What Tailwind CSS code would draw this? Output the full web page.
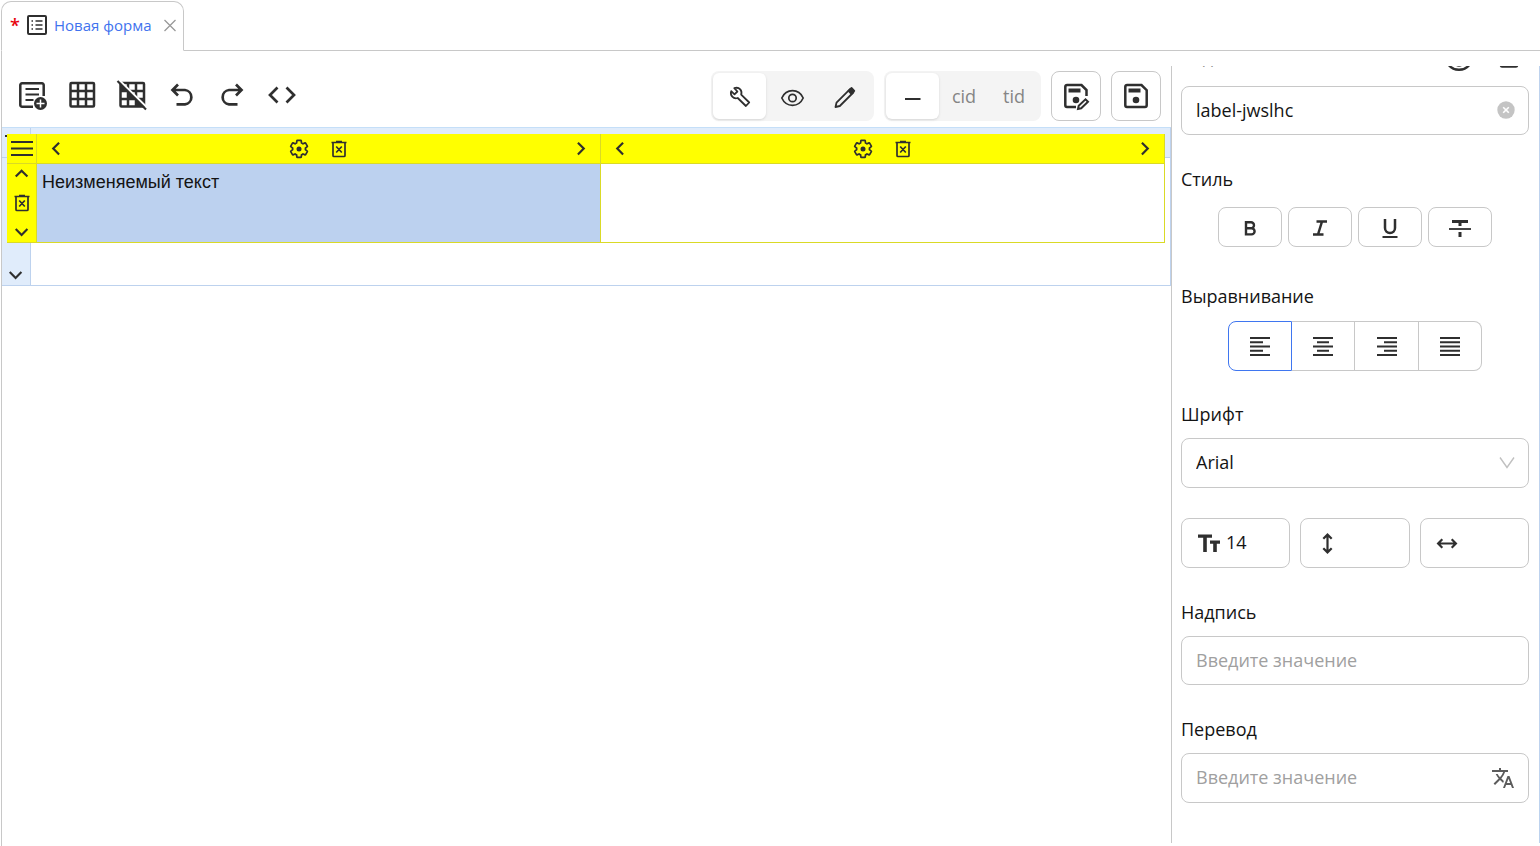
<!DOCTYPE html>
<html lang="ru">
<head>
    <meta charset="UTF-8">
    <meta name="viewport" content="width=device-width, initial-scale=1.0">
    <script src="https://cdn.jsdelivr.net/npm/@tailwindcss/browser@4"></script>
    <title>Новая форма</title>
</head>
<body class="h-screen overflow-hidden flex flex-col bg-white text-[#141414] text-[18px] font-['Open_Sans','Noto_Sans',sans-serif]">
    <!-- Shared icons -->
    <svg class="hidden">
        <symbol id="chevron-left" viewBox="0 0 24 24"><path d="M14.500 4.500 7.500 11.500l7 7" fill="none" stroke="currentColor" stroke-width="2.600"/></symbol>
        <symbol id="chevron-right" viewBox="0 0 24 24"><path d="m9.500 4.500 7 7-7 7" fill="none" stroke="currentColor" stroke-width="2.600"/></symbol>
        <symbol id="chevron-up" viewBox="0 0 24 24"><path d="m4.500 15 7-7 7 7" fill="none" stroke="currentColor" stroke-width="2.600"/></symbol>
        <symbol id="chevron-down" viewBox="0 0 24 24"><path d="m4.500 8.500 7 7 7-7" fill="none" stroke="currentColor" stroke-width="2.600"/></symbol>
        <symbol id="menu" viewBox="0 0 24 16"><path d="M1 1h22M1 7.500h22M1 14h22" fill="none" stroke="currentColor" stroke-width="2"/></symbol>
        <symbol id="trash" viewBox="0 0 20 20"><path d="M2.500 3.500h15M7 2.500h6M4 4v12.500a1 1 0 0 0 1 1h10a1 1 0 0 0 1-1V4M7.200 7.500l5.600 6M12.800 7.500l-5.600 6" fill="none" stroke="currentColor" stroke-width="1.700"/></symbol>
        <symbol id="gear" viewBox="0 0 24 24"><path d="M19.430 12.980c.04-.32.07-.64.07-.98s-.03-.66-.07-.98l2.110-1.650c.19-.15.24-.42.12-.64l-2-3.460c-.09-.16-.26-.25-.44-.25-.06 0-.12.01-.17.03l-2.490 1c-.52-.4-1.080-.73-1.690-.98l-.38-2.650A.488.488 0 0 0 14 2h-4c-.25 0-.46.18-.49.42l-.38 2.650c-.61.25-1.170.59-1.690.98l-2.490-1a.566.566 0 0 0-.18-.03c-.17 0-.34.09-.43.25l-2 3.460c-.13.22-.07.49.12.64l2.110 1.650c-.04.32-.07.65-.07.98s.03.66.07.98l-2.110 1.650c-.19.15-.24.42-.12.64l2 3.460c.09.16.26.25.44.25.06 0 .12-.01.17-.03l2.490-1c.52.4 1.080.73 1.690.98l.38 2.650c.03.24.24.42.49.42h4c.25 0 .46-.18.49-.42l.38-2.650c.61-.25 1.170-.59 1.690-.98l2.490 1c.06.02.12.03.18.03.17 0 .34-.09.43-.25l2-3.460c.12-.22.07-.49-.12-.64z" transform="translate(-.3 -.5) scale(1.030)" fill="none" stroke="currentColor" stroke-width="2"/><circle cx="12" cy="12" r="3" fill="currentColor"/></symbol>
    </svg>

    <!-- Tabs -->
    <header class="ml-px mt-px h-[50px] flex shrink-0 border-b border-[#c8c8c8]">
        <div class="h-[50px] flex items-center rounded-t-[10px] border border-b-white border-[#c8c8c8] bg-white pl-[8px] pr-[5px] pb-[2px] text-[15px]">
            <span class="w-[15px] text-[18px] text-red-600 font-semibold leading-none">*</span>
            <svg class="size-6 mr-[5px] text-[#2f2f2f]" viewBox="0 0 24 24" fill="none" stroke="currentColor" stroke-width="2"><rect x="3" y="3" width="18" height="18" rx="1"/><path d="M10.500 8h7M10.500 12h7M10.500 16h7" stroke-width="1.500"/><path d="M6.500 8H8M6.500 12H8M6.500 16H8" stroke-width="1.500"/></svg>
            <a href="#" class="text-[#3f73ee]">Новая форма</a>
            <button type="button" aria-label="Закрыть" class="ml-[10px] text-[#999]">
                <svg class="size-4" viewBox="0 0 16 16" stroke="currentColor" stroke-width="1.300"><path d="m2.500 3 11 11M13.500 3l-11 11"/></svg>
            </button>
        </div>
    </header>

    <main class="ml-px flex min-h-0 flex-1 border-l border-[#c8c8c8]">
        <section class="flex-1 min-w-0 flex flex-col">
            <!-- Toolbar -->
            <div class="h-[76px] shrink-0 flex items-center justify-between pl-[5px] pr-[10px] pt-[14px] text-[#2f2f2f]">
                <div class="flex pb-[2px]">
                    <button type="button" aria-label="Добавить поле" class="w-[50px] h-[34px] grid place-items-center">
                        <svg class="size-[34px]" viewBox="0 0 34 34" fill="none" stroke="currentColor" stroke-width="2.500"><path d="M18 28.700H7a1.700 1.700 0 0 1-1.700-1.700V7A1.700 1.700 0 0 1 7 5.300h20A1.700 1.700 0 0 1 28.700 7v11"/><path d="M10.500 11h13.500M10.500 16.500h13.500M10.500 22h8" stroke-width="2"/><circle cx="25.500" cy="25.500" r="6.500" fill="currentColor" stroke="none"/><path d="M25.500 21.500v8M21.500 25.500h8" stroke="#fff" stroke-width="1.500"/></svg>
                    </button>
                    <button type="button" aria-label="Таблица" class="w-[50px] h-[34px] grid place-items-center">
                        <svg class="size-[34px]" viewBox="0 0 34 34" fill="none" stroke="currentColor" stroke-width="2.500"><rect x="5.500" y="5" width="23.500" height="23.500" rx="1"/><path d="M13 5v24M21 5v24M5 13h24M5 21h24"/></svg>
                    </button>
                    <button type="button" aria-label="Удалить таблицу" class="w-[50px] h-[34px] grid place-items-center">
                        <svg class="size-[34px]" viewBox="0 0 34 34" fill="none" stroke="currentColor" stroke-width="2.500"><rect x="5.500" y="5" width="23.500" height="23.500" rx="1"/><path d="M13 5v24M21 5v24M5 13h24M5 21h24"/><path d="M5 5v8h8v8h8v8h8v-8h-6z" fill="currentColor" stroke="none"/><path d="M3.500 1.500 32 29.500" stroke="#fff" stroke-width="2.200"/><path d="m2.500 3 28.500 28.500" stroke-width="2.200"/></svg>
                    </button>
                    <button type="button" aria-label="Отменить" class="w-[50px] h-[34px] grid place-items-center">
                        <svg class="size-[34px]" viewBox="0 0 34 34" fill="none" stroke="currentColor" stroke-width="2.700"><path d="M13 6.500 7.500 12l5.500 5.500M7.500 12H20a7.200 7.200 0 0 1 0 14.300h-8.500"/></svg>
                    </button>
                    <button type="button" aria-label="Повторить" class="w-[50px] h-[34px] grid place-items-center">
                        <svg class="size-[34px]" viewBox="0 0 34 34" fill="none" stroke="currentColor" stroke-width="2.700"><path d="m21 6.500 5.500 5.500-5.500 5.500M26.500 12H14a7.200 7.200 0 0 0 0 14.300h8.500"/></svg>
                    </button>
                    <button type="button" aria-label="Код" class="w-[50px] h-[34px] grid place-items-center">
                        <svg class="size-[34px]" viewBox="0 0 34 34" fill="none" stroke="currentColor" stroke-width="2.700"><path d="m12.500 9.500-7.500 7.500 7.500 7.500M21.500 9.500l7.500 7.500-7.500 7.500"/></svg>
                    </button>
                </div>

                <div class="flex gap-[10px]">
                    <div class="flex h-[50px] p-[2px] rounded-lg bg-[#f4f4f4]">
                        <button type="button" aria-label="Настройка" aria-pressed="true" class="w-[53px] grid place-items-center rounded-md bg-white shadow-sm">
                            <svg class="size-6" viewBox="0 0 24 24" fill="none" stroke="currentColor" stroke-width="1.800" stroke-linejoin="round"><path d="M3.200 7.200 6.500 10.300 9.400 7.500 6.300 4.200C8.500 3.400 10.800 3.800 12.200 5.400c1.300 1.500 1.600 3.300 1 5.200l8 7.900-3.300 3.500-8.200-8c-2 .6-4 .2-5.400-1.400C3 11.200 2.500 9.200 3.200 7.200z"/></svg>
                        </button>
                        <button type="button" aria-label="Просмотр" class="w-[53px] grid place-items-center">
                            <svg class="size-6" viewBox="0 0 24 24" fill="none" stroke="currentColor" stroke-width="1.700"><path d="M.8 14C3 9.200 6.700 6.700 11.500 6.700s8.500 2.500 10.700 7.300c-2.200 4.800-5.900 7.300-10.700 7.300S3 18.800.8 14z"/><circle cx="11.500" cy="14" r="3.700"/></svg>
                        </button>
                        <button type="button" aria-label="Редактирование" class="w-[53px] grid place-items-center">
                            <svg class="size-6" viewBox="0 0 24 24" fill="none" stroke="currentColor" stroke-width="1.800" stroke-linejoin="round"><path d="M1.500 23 2.500 18.700 16 5.200l3.300 3.300L5.800 22z"/><path d="m14.500 6.800 3-2.800 2.800 2.800-2.900 3z" fill="currentColor"/></svg>
                        </button>
                    </div>
                    <div class="flex h-[50px] p-[2px] rounded-lg bg-[#f4f4f4] text-[#858585]">
                        <button type="button" aria-label="Нет" aria-pressed="true" class="w-[53px] grid place-items-center rounded-md bg-white shadow-sm text-[#2f2f2f]">
                            <svg class="size-4" viewBox="0 0 16 16" stroke="currentColor" stroke-width="2"><path d="M0 11h15.500"/></svg>
                        </button>
                        <button type="button" class="w-[50px]">cid</button>
                        <button type="button" class="w-[50px]">tid</button>
                    </div>
                    <button type="button" aria-label="Сохранить как" class="size-[50px] grid place-items-center rounded-lg border border-[#c8c8c8]">
                        <svg class="size-[34px]" viewBox="0 0 34 34" fill="none" stroke="currentColor" stroke-width="2.500"><path d="M17 28H8a1.700 1.700 0 0 1-1.700-1.700V7.700A1.700 1.700 0 0 1 8 6h14.500l5 5v6"/><path d="M9.500 11.500h12" stroke-width="4"/><circle cx="17" cy="21" r="3.300" fill="currentColor" stroke="none"/><path d="m19 30 .7-3.300 6.800-6.400 2.500 2.500-6.800 6.500z" stroke-width="2"/></svg>
                    </button>
                    <button type="button" aria-label="Сохранить" class="size-[50px] grid place-items-center rounded-lg border border-[#c8c8c8]">
                        <svg class="size-[34px]" viewBox="0 0 34 34" fill="none" stroke="currentColor" stroke-width="2.500"><path d="M8 6h14.500l5.200 5.200v15.100A1.700 1.700 0 0 1 26 28H8a1.700 1.700 0 0 1-1.700-1.700V7.700A1.700 1.700 0 0 1 8 6z"/><path d="M9.500 11.500h12" stroke-width="4"/><circle cx="17" cy="21" r="3.300" fill="currentColor" stroke="none"/></svg>
                    </button>
                </div>
            </div>

            <!-- Form canvas -->
            <div class="relative grid grid-cols-[29px_1fr] grid-rows-[30px_128px] border-t border-r border-t-[#c5dff8] border-r-[#bdd2ee] text-[#2f2f2f]">
                <button type="button" aria-label="Меню формы" class="border-r border-b border-[#bdd2ee] bg-[#e0ecfb] grid place-items-center">
                    <svg class="w-6 h-4" viewBox="0 0 24 16" stroke="currentColor" stroke-width="2"><path d="M1 1h22M4 7.500h16M4 14h16"/></svg>
                </button>
                <div class="border-b border-[#bdd2ee] bg-[#e0ecfb]"></div>
                <div class="flex flex-col justify-end items-center border-r border-b border-[#bdd2ee] bg-[#e0ecfb]">
                    <button type="button" aria-label="Ниже"><svg class="size-5"><use href="#chevron-down"/></svg></button>
                </div>
                <div class="border-b border-[#bdd2ee]"></div>

                <!-- Nested table of the selected row -->
                <div class="absolute left-[5px] right-[5px] top-[6px] grid grid-cols-[30px_1fr_1fr] grid-rows-[30px_79px]">
                    <button type="button" aria-label="Меню таблицы" class="border-r border-b border-[#dada26] bg-[#ff0] grid place-items-center">
                        <svg class="w-6 h-4"><use href="#menu"/></svg>
                    </button>
                    <div class="border-r border-b border-[#dada26] bg-[#ff0] flex justify-between items-center">
                        <button type="button" aria-label="Левее" class="w-10 grid place-items-center"><svg class="size-5"><use href="#chevron-left"/></svg></button>
                        <div class="flex">
                            <button type="button" aria-label="Настройки столбца" class="w-10 grid place-items-center"><svg class="size-5"><use href="#gear"/></svg></button>
                            <button type="button" aria-label="Удалить столбец" class="w-10 grid place-items-center"><svg class="size-5"><use href="#trash"/></svg></button>
                        </div>
                        <button type="button" aria-label="Правее" class="w-10 grid place-items-center"><svg class="size-5"><use href="#chevron-right"/></svg></button>
                    </div>
                    <div class="border-r border-b border-[#dada26] bg-[#ff0] flex justify-between items-center">
                        <button type="button" aria-label="Левее" class="w-10 grid place-items-center"><svg class="size-5"><use href="#chevron-left"/></svg></button>
                        <div class="flex">
                            <button type="button" aria-label="Настройки столбца" class="w-10 grid place-items-center"><svg class="size-5"><use href="#gear"/></svg></button>
                            <button type="button" aria-label="Удалить столбец" class="w-10 grid place-items-center"><svg class="size-5"><use href="#trash"/></svg></button>
                        </div>
                        <button type="button" aria-label="Правее" class="w-10 grid place-items-center"><svg class="size-5"><use href="#chevron-right"/></svg></button>
                    </div>
                    <div class="border-r border-b border-[#dada26] bg-[#ff0] flex flex-col items-center justify-between">
                        <button type="button" aria-label="Выше"><svg class="size-5"><use href="#chevron-up"/></svg></button>
                        <button type="button" aria-label="Удалить строку"><svg class="size-5"><use href="#trash"/></svg></button>
                        <button type="button" aria-label="Ниже"><svg class="size-5"><use href="#chevron-down"/></svg></button>
                    </div>
                    <div class="border-r border-b border-[#dada26] bg-[#bcd1ef] px-[5px] pt-[7px] font-['Liberation_Sans',sans-serif] text-[18px] leading-[22px] text-[#141414]">Неизменяемый текст</div>
                    <div class="border-r border-b border-[#dada26] bg-white"></div>
                </div>
            </div>
        </section>

        <!-- Properties -->
        <aside class="w-[369px] shrink-0 mt-[15px] mb-[3px] overflow-hidden border-l border-r border-l-[#c8c8c8] border-r-[#bdd2ee] pl-[9px] pr-[10px]">
            <div class="-mt-[24px] mb-[16px] h-7 flex items-center justify-between">
                <label for="code" class="leading-7">Код</label>
                <div class="flex items-center gap-[20px] pt-[8px] pr-[5px] text-[#2f2f2f]">
                    <button type="button" aria-label="Видимость"><svg class="size-[30px]" viewBox="0 0 24 24" fill="none" stroke="currentColor" stroke-width="1.900"><path d="M2 13c2-4.500 5.800-6.500 10-6.500s8 2 10 6.500c-2 4.500-5.800 6.800-10 6.800S4 17.500 2 13z"/><circle cx="12" cy="13" r="3.500"/></svg></button>
                    <button type="button" aria-label="Блокировка"><svg class="size-[30px]" viewBox="0 0 30 30" fill="none" stroke="currentColor" stroke-width="2.500"><rect x="7" y="9" width="16" height="12.500" rx="1"/><path d="M11 9V6a4 4 0 0 1 8 0v3"/></svg></button>
                </div>
            </div>
            <div class="relative">
                <input id="code" type="text" value="label-jwslhc" class="w-full h-[49px] px-[14px] pb-[2px] rounded-lg border border-[#c8c8c8] outline-none">
                <button type="button" aria-label="Очистить" class="absolute right-[14px] top-[15px]">
                    <svg class="size-[18px]" viewBox="0 0 18 18"><circle cx="9" cy="9" r="8.700" fill="#c4c4c4"/><path d="m6.200 6.200 5.600 5.600M11.800 6.200l-5.600 5.600" stroke="#fff" stroke-width="1.600"/></svg>
                </button>
            </div>

            <h2 class="mt-[30px] leading-7">Стиль</h2>
            <div class="mt-[14px] flex justify-center gap-[6px] text-[#2f2f2f]">
                <button type="button" aria-label="Полужирный" class="w-16 h-10 grid place-items-center rounded-lg border border-[#c8c8c8]">
                    <svg class="size-6" viewBox="0 0 24 24" fill="none" stroke="currentColor" stroke-width="2.400"><path d="M8 7.200h5a3 3 0 0 1 0 6h-5M8 13.200h5.500a3.100 3.100 0 0 1 0 6.200H8zM8 6v14.600"/></svg>
                </button>
                <button type="button" aria-label="Курсив" class="w-16 h-10 grid place-items-center rounded-lg border border-[#c8c8c8]">
                    <svg class="size-6" viewBox="0 0 24 24" fill="none" stroke="currentColor" stroke-width="2.500"><path d="M8.500 6.500h10.500M5 19.500h10.500M14 6.500l-4 13"/></svg>
                </button>
                <button type="button" aria-label="Подчёркнутый" class="w-16 h-10 grid place-items-center rounded-lg border border-[#c8c8c8]">
                    <svg class="size-6" viewBox="0 0 24 24" fill="none" stroke="currentColor" stroke-width="2.500"><path d="M7 4v9a5 5 0 0 0 10 0V4"/><path d="M4.500 22h15" stroke-width="2"/></svg>
                </button>
                <button type="button" aria-label="Зачёркнутый" class="w-16 h-10 grid place-items-center rounded-lg border border-[#c8c8c8]">
                    <svg class="size-6" viewBox="0 0 24 24" fill="none" stroke="currentColor"><path d="M4 6.500h16" stroke-width="3"/><path d="M12 6v5M12 17v5" stroke-width="3"/><path d="M1 14h22" stroke-width="1.800"/></svg>
                </button>
            </div>

            <h2 class="mt-[35px] leading-7">Выравнивание</h2>
            <div class="mt-[11px] flex justify-center text-[#2f2f2f]">
                <button type="button" aria-label="По левому краю" aria-pressed="true" class="w-16 h-[50px] grid place-items-center rounded-l-lg border border-[#3f76f0]">
                    <svg class="size-6" viewBox="0 0 24 24" stroke="currentColor" stroke-width="1.900"><path d="M2 4h20M2 8.250h13M2 12.500h20M2 16.750h13M2 21h20"/></svg>
                </button>
                <button type="button" aria-label="По центру" class="w-[63px] h-[50px] grid place-items-center border border-l-0 border-[#c8c8c8]">
                    <svg class="size-6" viewBox="0 0 24 24" stroke="currentColor" stroke-width="1.900"><path d="M2 4h20M6 8.250h12M2 12.500h20M6 16.750h12M2 21h20"/></svg>
                </button>
                <button type="button" aria-label="По правому краю" class="w-16 h-[50px] grid place-items-center border border-l-0 border-[#c8c8c8]">
                    <svg class="size-6" viewBox="0 0 24 24" stroke="currentColor" stroke-width="1.900"><path d="M2 4h20M9 8.250h13M2 12.500h20M9 16.750h13M2 21h20"/></svg>
                </button>
                <button type="button" aria-label="По ширине" class="w-[63px] h-[50px] grid place-items-center rounded-r-lg border border-l-0 border-[#c8c8c8]">
                    <svg class="size-6" viewBox="0 0 24 24" stroke="currentColor" stroke-width="1.900"><path d="M2 4h20M2 8.250h20M2 12.500h20M2 16.750h20M2 21h20"/></svg>
                </button>
            </div>

            <label for="font" class="mt-[29px] block leading-7">Шрифт</label>
            <div class="relative mt-[10px]">
                <select id="font" class="appearance-none w-full h-[50px] px-[14px] pb-[2px] rounded-lg border border-[#c8c8c8] bg-white">
                    <option>Arial</option>
                </select>
                <svg class="absolute right-[14px] top-[17px] size-4 pointer-events-none text-[#c0c0c0]" viewBox="0 0 16 16" fill="none" stroke="currentColor" stroke-width="1.400"><path d="M1 2.500 8 12.500l7-10"/></svg>
            </div>

            <div class="mt-[30px] grid grid-cols-3 gap-[10px] text-[#2f2f2f]">
                <label class="h-[50px] flex items-center gap-[4px] px-[14px] rounded-lg border border-[#c8c8c8]">
                    <svg class="size-[26px] shrink-0" viewBox="0 0 26 26" fill="none" stroke="currentColor"><path d="M2 6.200h14M14 12.200h10" stroke-width="3.200"/><path d="M9 6v16M19 12v10" stroke-width="3.600"/></svg>
                    <input type="text" value="14" aria-label="Размер шрифта" class="min-w-0 w-full pb-[2px] outline-none text-[#141414]">
                </label>
                <label class="h-[50px] flex items-center gap-[4px] px-[14px] rounded-lg border border-[#c8c8c8]">
                    <svg class="size-6 shrink-0" viewBox="0 0 24 24" fill="none" stroke="currentColor" stroke-width="2.200"><path d="M12.500 4v17M8.300 7.800l4.200-4.200 4.200 4.200M8.300 17.200l4.200 4.200 4.200-4.200"/></svg>
                    <input type="text" aria-label="Высота" class="min-w-0 w-full outline-none">
                </label>
                <label class="h-[50px] flex items-center gap-[4px] px-[14px] rounded-lg border border-[#c8c8c8]">
                    <svg class="size-6 shrink-0" viewBox="0 0 24 24" fill="none" stroke="currentColor" stroke-width="2.200"><path d="M3.500 12.500h17M7.300 8.300l-4.200 4.200 4.200 4.200M16.700 8.300l4.200 4.200-4.200 4.200"/></svg>
                    <input type="text" aria-label="Ширина" class="min-w-0 w-full outline-none">
                </label>
            </div>

            <label for="caption" class="mt-[30px] block leading-7">Надпись</label>
            <input id="caption" type="text" placeholder="Введите значение" class="mt-[10px] w-full h-[49px] px-[14px] pb-[2px] rounded-lg border border-[#c8c8c8] outline-none placeholder:text-[#a0a0a0]">

            <label for="translation" class="mt-[30px] block leading-7">Перевод</label>
            <div class="relative mt-[10px]">
                <input id="translation" type="text" placeholder="Введите значение" class="w-full h-[50px] pl-[14px] pr-[48px] pb-[2px] rounded-lg border border-[#c8c8c8] outline-none placeholder:text-[#a0a0a0]">
                <button type="button" aria-label="Перевести" class="absolute right-[14px] top-[13px] text-[#5c5c5c]">
                    <svg class="size-6" viewBox="0 0 24 24" fill="currentColor"><path d="m12.870 15.070-2.540-2.510.03-.03A17.520 17.520 0 0 0 14.070 6H17V4h-7V2H8v2H1v1.990h11.170C11.500 7.920 10.440 9.750 9 11.350 8.070 10.320 7.300 9.190 6.690 8h-2c.73 1.630 1.730 3.170 2.980 4.560l-5.090 5.020L4 19l5-5 3.110 3.110.76-2.040zM18.500 10h-2L12 22h2l1.120-3h4.750L21 22h2l-4.500-12zm-2.620 7 1.620-4.330L19.120 17h-3.240z"/></svg>
                </button>
            </div>
        </aside>
    </main>
</body>
</html>
